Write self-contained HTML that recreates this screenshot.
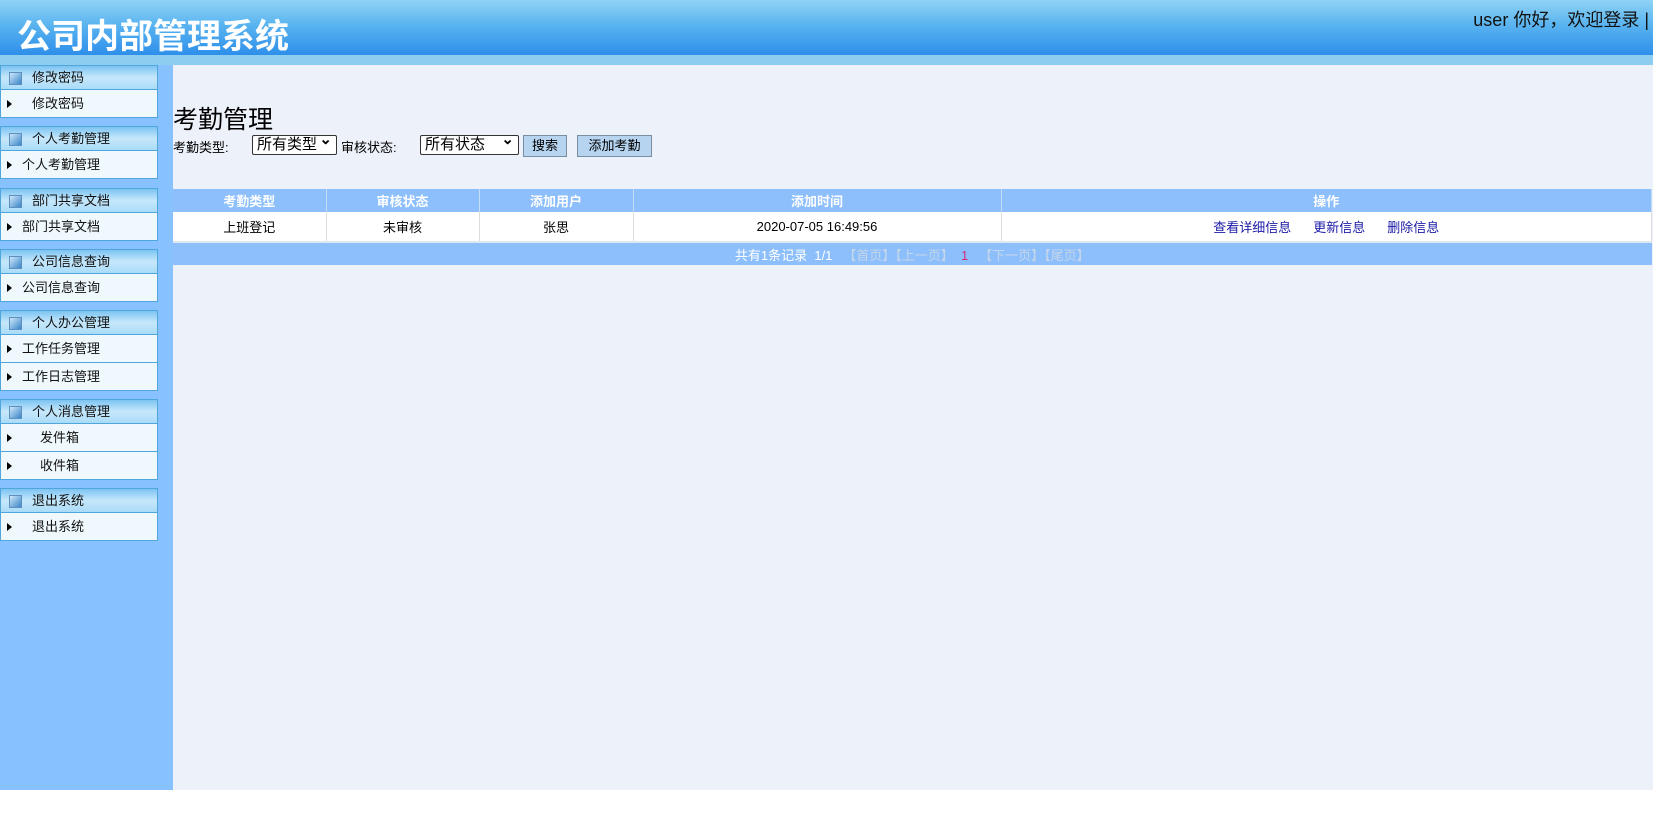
<!DOCTYPE html>
<html><head><meta charset="utf-8"><style>
*{margin:0;padding:0;box-sizing:border-box}
body{width:1653px;height:821px;background:#fff;font-family:"Liberation Sans","Noto Sans CJK SC",sans-serif;font-size:13px;color:#000;position:relative;overflow:hidden}
#top{position:absolute;left:0;top:0;width:1653px;height:55px;background:linear-gradient(#8fd3f5,#5ab4f0 45%,#2e8fea)}
#top h1{position:absolute;left:17px;top:9px;font-size:34px;color:#fff;font-weight:bold;letter-spacing:0px}
#top .u{position:absolute;right:4px;top:6px;font-size:18px;color:#111}
#strip{position:absolute;left:0;top:55px;width:1653px;height:10px;background:#8dcdf0}
#side{position:absolute;left:0;top:65px;width:173px;height:725px;background:#87c1fe}
#main{position:absolute;left:173px;top:65px;width:1480px;height:725px;background:#edf1fa}
.g{position:absolute;left:0;width:158px}
.h{height:25px;background:linear-gradient(#7cc4f2,#c6e7fb 50%,#a9dcf8);border:1px solid #4ea6dc;line-height:23px;padding-left:31px;position:relative;color:#111}
.h:before{content:"";position:absolute;left:8px;top:6px;width:11px;height:11px;background:linear-gradient(135deg,#cfe8fa,#3a86c8);border:1px solid #5e8fbf}
.i{height:28px;background:#eef8fd;border:1px solid #4ea6dc;border-top:none;line-height:27px;position:relative;color:#111}
.i:before{content:"";position:absolute;left:6px;top:10px;border-left:5px solid #000;border-top:4px solid transparent;border-bottom:4px solid transparent}
h2{position:absolute;left:173px;top:100px;font-size:25px;font-weight:normal}
.f{position:absolute;top:137px;font-size:13px}
.sel{position:absolute;top:135px;height:20px;border:1px solid #333;background:#fff;font-size:15px;line-height:18px;padding-left:4px;border-radius:2px}
.sel:after{content:"⌄";position:absolute;right:4px;top:-5px;font-size:15px;font-weight:bold}
.btn{position:absolute;top:135px;height:22px;background:#b6d4f0;border:1px solid #7a8ea3;font-size:13px;line-height:20px;text-align:center}
table{position:absolute;left:173px;top:189px;width:1479px;border-collapse:collapse}
th{background:#8cbffb;color:#fff;font-weight:bold;height:23px;font-size:13px;border-right:1px solid #c5dcf5}
td{background:#fff;height:30px;text-align:center;border-right:1px solid #ddd;border-bottom:2px solid #dfe6ee}
td.ft{background:#8cbffb;height:23px;color:#fff;border:none}
.gr{color:#c6d6ea}
a{color:#1a1aa6;text-decoration:none;margin:0 11px}
</style></head><body>
<div id="top"><h1>公司内部管理系统</h1><div class="u">user 你好，欢迎登录 |</div></div>
<div id="strip"></div>
<div id="side">
<div class="g" style="top:0"><div class="h">修改密码</div><div class="i" style="padding-left:31px">修改密码</div></div>
<div class="g" style="top:61px"><div class="h">个人考勤管理</div><div class="i" style="padding-left:21px">个人考勤管理</div></div>
<div class="g" style="top:123px"><div class="h">部门共享文档</div><div class="i" style="padding-left:21px">部门共享文档</div></div>
<div class="g" style="top:184px"><div class="h">公司信息查询</div><div class="i" style="padding-left:21px">公司信息查询</div></div>
<div class="g" style="top:245px"><div class="h">个人办公管理</div><div class="i" style="padding-left:21px">工作任务管理</div><div class="i" style="padding-left:21px">工作日志管理</div></div>
<div class="g" style="top:334px"><div class="h">个人消息管理</div><div class="i" style="padding-left:39px">发件箱</div><div class="i" style="padding-left:39px">收件箱</div></div>
<div class="g" style="top:423px"><div class="h">退出系统</div><div class="i" style="padding-left:31px">退出系统</div></div>
</div>
<div id="main"></div>
<h2>考勤管理</h2>
<div class="f" style="left:173px">考勤类型:</div>
<div class="sel" style="left:252px;width:85px">所有类型</div>
<div class="f" style="left:341px">审核状态:</div>
<div class="sel" style="left:420px;width:99px">所有状态</div>
<div class="btn" style="left:523px;width:44px">搜索</div>
<div class="btn" style="left:577px;width:75px">添加考勤</div>
<table>
<tr><th style="width:153px">考勤类型</th><th style="width:153px">审核状态</th><th style="width:154px">添加用户</th><th style="width:368px">添加时间</th><th>操作</th></tr>
<tr><td>上班登记</td><td>未审核</td><td>张思</td><td>2020-07-05 16:49:56</td><td><a>查看详细信息</a><a>更新信息</a><a>删除信息</a></td></tr>
<tr><td class="ft" colspan="5">共有1条记录&nbsp; 1/1 &nbsp;&nbsp;<span class="gr">【首页】【上一页】</span>&nbsp; <span style="color:#d0307a">1</span> &nbsp;&nbsp;<span class="gr">【下一页】【尾页】</span></td></tr>
</table>
</body></html>
